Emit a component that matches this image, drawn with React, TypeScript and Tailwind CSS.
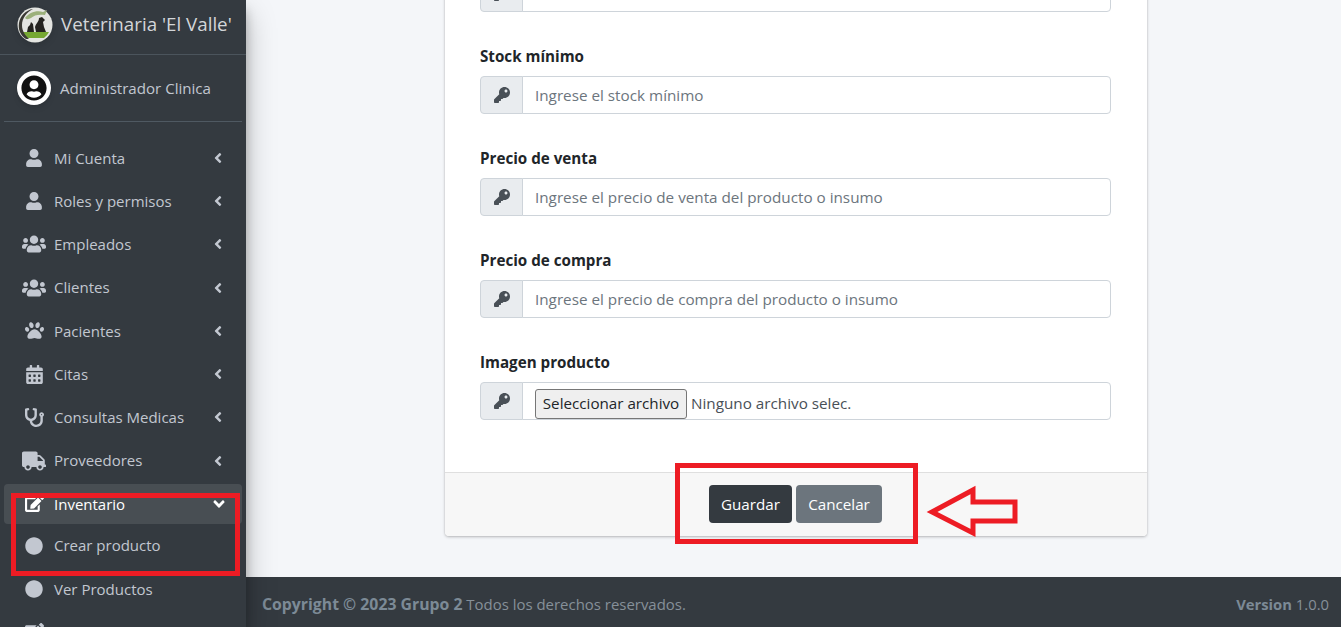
import React from "react";
import {
  FaUser,
  FaUsers,
  FaPaw,
  FaCalendarAlt,
  FaStethoscope,
  FaTruck,
  FaEdit,
  FaCircle,
  FaKey,
  FaAngleLeft,
  FaAngleDown,
  FaUserCircle,
} from "react-icons/fa";

const menu = [
  { label: "Mi Cuenta", icon: FaUser, size: 18 },
  { label: "Roles y permisos", icon: FaUser, size: 18 },
  { label: "Empleados", icon: FaUsers, size: 24 },
  { label: "Clientes", icon: FaUsers, size: 24 },
  { label: "Pacientes", icon: FaPaw, size: 19 },
  { label: "Citas", icon: FaCalendarAlt, size: 19 },
  { label: "Consultas Medicas", icon: FaStethoscope, size: 19 },
  { label: "Proveedores", icon: FaTruck, size: 24 },
];

const fields = [
  { label: "Stock mínimo", placeholder: "Ingrese el stock mínimo" },
  { label: "Precio de venta", placeholder: "Ingrese el precio de venta del producto o insumo" },
  { label: "Precio de compra", placeholder: "Ingrese el precio de compra del producto o insumo" },
];

function Logo() {
  return (
    <svg width="36" height="36" viewBox="0 0 36 36" className="shrink-0 drop-shadow-md">
      <circle cx="18" cy="18" r="17.5" fill="#e4e5e1" />
      <path d="M4 25 L32 25 A15.5 15.5 0 0 1 27 31 L9 31 A15.5 15.5 0 0 1 4 25 Z" fill="#76a832" />
      <path d="M9 32 C3 28 1 22 2 16 C3 9 9 3 16 2 C10 5 5 11 5 18 C5 24 8 28 12 32 Z" fill="#3a3933" />
      <path d="M8 11 C12 6 19 3 26 5 L30 3 L28 8 C22 7 17 8 14 11 C12 12 10 13 8 11 Z" fill="#9bb07a" />
      <path d="M19 25 L18 20 C19 16 22 15 22 11 L25 10 L28 13 L26 15 L27 20 L29 25 Z" fill="#24231f" />
      <path d="M10 25 L11 20 L13 18 L14 15 L16 17 L17 25 Z" fill="#24231f" />
    </svg>
  );
}

function KeyAddon() {
  return (
    <div className="flex h-[38px] w-[43px] shrink-0 items-center justify-center rounded-l-[4px] border border-[#ced4da] bg-[#e9ecef] text-[#495057]">
      <FaKey size={16} />
    </div>
  );
}

function Field({ label, placeholder }: { label: string; placeholder: string }) {
  return (
    <div className="mb-[32px]">
      <div className="mb-[8px] h-[24px] text-[15.2px] leading-[24px] font-bold text-[#212529]">{label}</div>
      <div className="flex">
        <KeyAddon />
        <div className="-ml-px flex h-[38px] flex-1 items-center rounded-r-[4px] border border-[#ced4da] bg-white px-[12px] text-[15.25px] text-[#6c757d]">
          {placeholder}
        </div>
      </div>
    </div>
  );
}

export default function App() {
  return (
    <div className="relative flex h-[627px] w-[1341px] overflow-hidden bg-[#f4f6f9] font-['Open_Sans','Liberation_Sans',sans-serif]">
      <aside className="z-10 flex h-full w-[246px] shrink-0 flex-col overflow-hidden bg-[#343a40] shadow-[0_14px_28px_rgba(0,0,0,0.25),0_10px_10px_rgba(0,0,0,0.22)]">
        <div className="flex h-[55px] shrink-0 items-center border-b border-[#4b545c] pb-[7px] pl-[17px] pt-[2px]">
          <Logo />
          <span className="ml-[8px] text-[18.75px] text-[#d3d6d9]">Veterinaria 'El Valle'</span>
        </div>
        <div className="mx-[4px] flex h-[67px] shrink-0 items-center border-b border-[#4f5962] pl-[13px]">
          <div className="flex h-[34px] w-[34px] items-center justify-center rounded-full bg-white text-[#111] shadow-md">
            <FaUserCircle size={26} />
          </div>
          <span className="ml-[9px] mt-[1px] text-[15.1px] text-[#c2c7d0]">Administrador Clinica</span>
        </div>
        <nav className="mx-[4px] flex flex-col pt-[14.3px]">
          {menu.map((item) => (
            <div key={item.label} className="flex h-[43.25px] shrink-0 items-center pr-[16px] text-[15px] text-[#c2c7d0]">
              <span className="flex w-[50px] shrink-0 justify-center pl-[10px]">
                <item.icon size={item.size} />
              </span>
              <span className="flex-1">{item.label}</span>
              <FaAngleLeft size={16} />
            </div>
          ))}
          <div className="mt-[1.7px] flex h-[40px] shrink-0 items-center rounded-[4px] bg-white/10 pr-[14px] text-[15px] text-white">
            <span className="flex w-[50px] shrink-0 justify-center pl-[10px]">
              <FaEdit size={19} />
            </span>
            <span className="flex-1">Inventario</span>
            <FaAngleDown size={18} />
          </div>
          {["Crear producto", "Ver Productos", ""].map((label, i) => (
            <div key={i} className="flex h-[43.2px] shrink-0 items-center text-[15px] text-[#c2c7d0] first:mt-[4px]">
              <span className="flex w-[50px] shrink-0 justify-center pl-[10px]">
                {label ? <FaCircle size={18} /> : <FaEdit size={19} />}
              </span>
              <span>{label}</span>
            </div>
          ))}
        </nav>
      </aside>

      <div className="flex h-full min-w-0 flex-1 flex-col">
        <main className="min-h-0 flex-1 overflow-hidden">
          <div className="-mt-[41px] ml-[199px] w-[702px] rounded-[4px] bg-white shadow-[0_0_1px_rgba(0,0,0,0.2),0_1px_3px_rgba(0,0,0,0.25)]">
            <div className="pl-[35px] pr-[36px] pt-[15px] pb-[52px]">
              <div className="mb-[32px] flex h-[38px]">
                <KeyAddon />
                <div className="-ml-px flex-1 rounded-r-[4px] border border-[#ced4da]" />
              </div>
              {fields.map((f) => (
                <Field key={f.label} label={f.label} placeholder={f.placeholder} />
              ))}
              <div className="text-[15.2px] leading-[24px] font-bold text-[#212529]">Imagen producto</div>
              <div className="mt-[8px] flex">
                <KeyAddon />
                <div className="-ml-px flex h-[38px] flex-1 items-center rounded-r-[4px] border border-[#ced4da] bg-white pl-[12px] text-[15.25px] text-[#495057]">
                  <span className="mt-[5px] flex h-[30px] w-[152px] items-center justify-center rounded-[3px] border border-[#767676] bg-[#efefef] text-[15.2px] text-[#212529]">
                    Seleccionar archivo
                  </span>
                  <span className="mt-[5px] ml-[4px]">Ninguno archivo selec.</span>
                </div>
              </div>
            </div>
            <div className="flex h-[64px] items-start justify-center gap-[4px] rounded-b-[4px] border-t border-[#dfdfdf] bg-[#f7f7f7] pr-[1px] pt-[12px]">
              <span className="flex h-[38px] w-[83px] items-center justify-center rounded-[4px] bg-[#343a40] text-[15.2px] text-white">Guardar</span>
              <span className="flex h-[38px] w-[86px] items-center justify-center rounded-[4px] bg-[#6c757d] text-[15.2px] text-white">Cancelar</span>
            </div>
          </div>
        </main>
        <footer className="flex h-[50px] shrink-0 items-center justify-between bg-[#343a40] pl-[16px] pr-[12px] pt-[5px] text-[14.95px] text-[#869099]">
          <span>
            <b className="text-[15.8px] font-bold text-[#7c8a96]">Copyright © 2023 Grupo 2</b> Todos los derechos reservados.
          </span>
          <span className="text-[14.8px]">
            <b className="font-bold text-[#7c8a96]">Version</b> 1.0.0
          </span>
        </footer>
      </div>

      {/* red marks drawn over the screenshot */}
      <div className="absolute left-[11px] top-[493px] z-20 h-[83px] w-[229px] border-[5px] border-[#ed1c24]" />
      <div className="absolute left-[675px] top-[463px] z-20 h-[81px] w-[243px] border-[5px] border-[#ed1c24]" />
      <svg className="absolute left-[925px] top-[484px] z-20" width="96" height="54" viewBox="0 0 96 54">
        <path d="M7 28 L48 6 L48 18 L90 18 L90 37 L48 37 L48 49 Z" fill="none" stroke="#ed1c24" strokeWidth="5" />
      </svg>
    </div>
  );
}
